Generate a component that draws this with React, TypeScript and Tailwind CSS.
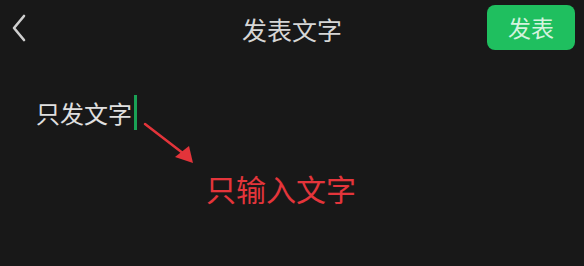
import React from "react";

export default function App() {
  return (
    <div className="relative w-[584px] h-[266px] bg-[#181818] overflow-hidden" style={{ fontFamily: '"Noto Sans CJK SC", "Noto Sans", sans-serif' }}>
      <div className="grid grid-cols-[1fr_auto_1fr] items-center h-[55px]">
        <div className="pl-[11px] flex items-center">
          <svg width="16" height="28" viewBox="0 0 16 28" fill="none">
            <path d="M13 2 L3 14 L13 26" stroke="#cfcfcf" strokeWidth="2.6" strokeLinecap="round" strokeLinejoin="round" />
          </svg>
        </div>
        <div className="mt-[4px] text-[25px] leading-none text-[#d6d6d6]">发表文字</div>
        <div className="flex justify-end pr-[9px]">
          <button className="w-[88px] h-[45px] rounded-[8px] bg-[#1fbf5f] text-[23px] leading-none text-[#d4f3df]">发表</button>
        </div>
      </div>
      <div className="pl-[36px] pt-[40px] flex items-center">
        <span className="text-[24px] leading-none text-[#e0e0e0]">只发文字</span>
        <span className="ml-[2px] w-[3px] h-[35px] bg-[#1aa155]" />
      </div>
      <div className="pl-[206px] pt-[43px] text-[30px] leading-none text-[#e4353b]">只输入文字</div>
      <svg className="absolute left-0 top-0" width="584" height="266" viewBox="0 0 584 266">
        <line x1="145" y1="124" x2="184" y2="154" stroke="#e3343a" strokeWidth="2.5" strokeLinecap="round" />
        <polygon points="193,163 175,157 189,146" fill="#e3343a" />
      </svg>
    </div>
  );
}
